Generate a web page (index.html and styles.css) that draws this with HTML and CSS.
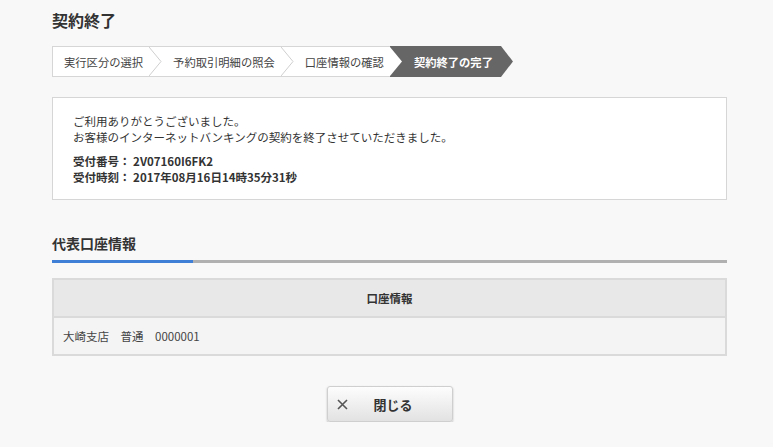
FILE: index.html
```html
<!DOCTYPE html>
<html lang="ja">
<head>
	<meta charset="UTF-8">
	<title>契約終了</title>
	<link rel="stylesheet" href="styles.css">
</head>
<body>
	<main class="page">

		<h1 class="page-title">契約終了</h1>

		<ol class="steps">
			<li class="steps-bar">
				<span class="step step-first">実行区分の選択</span>
				<svg class="sep" width="13" height="31" viewBox="0 0 13 31"><rect x="0" y="0" width="13" height="31" fill="#fff"/><line x1="0" y1="0.5" x2="13" y2="0.5" stroke="#d6d6d6"/><line x1="0" y1="30.5" x2="13" y2="30.5" stroke="#d6d6d6"/><polyline points="0,1 12,15.5 0,30" fill="none" stroke="#cfcfcf"/></svg>
				<span class="step">予約取引明細の照会</span>
				<svg class="sep" width="13" height="31" viewBox="0 0 13 31"><rect x="0" y="0" width="13" height="31" fill="#fff"/><line x1="0" y1="0.5" x2="13" y2="0.5" stroke="#d6d6d6"/><line x1="0" y1="30.5" x2="13" y2="30.5" stroke="#d6d6d6"/><polyline points="0,1 12,15.5 0,30" fill="none" stroke="#cfcfcf"/></svg>
				<span class="step">口座情報の確認</span>
				<svg class="sep sep-last" width="13" height="31" viewBox="0 0 13 31"><polygon points="0,1 12,15.5 0,30" fill="#fff"/></svg>
			</li>
			<li class="step step-current">契約終了の完了</li>
		</ol>

		<div class="message">
			<p>ご利用ありがとうございました。<br>お客様のインターネットバンキングの契約を終了させていただきました。</p>
			<p class="receipt">受付番号：&nbsp;2V07160I6FK2<br>受付時刻：&nbsp;2017年08月16日14時35分31秒</p>
		</div>

		<h2 class="section-title">代表口座情報</h2>
		<div class="section-bar"></div>

		<table class="account">
			<thead>
				<tr><th>口座情報</th></tr>
			</thead>
			<tbody>
				<tr><td>大崎支店&emsp;普通&emsp;0000001</td></tr>
			</tbody>
		</table>

		<div class="actions">
			<button class="close-btn">
				<svg class="close-x" width="11" height="11" viewBox="0 0 11 11"><path d="M1 1L10 10M10 1L1 10" stroke="#555" stroke-width="1.6" fill="none"/></svg>
				<span class="close-label">閉じる</span>
			</button>
		</div>

	</main>
</body>
</html>
```

FILE: styles.css
```css
* {
	box-sizing: border-box;
}

body {
	margin: 0;
	background-color: #f8f8f8;
	color: #333;
	font-family: "Noto Sans CJK JP", "Noto Sans", sans-serif;
}

.page {
	width: 675px;
	margin-left: 52px;
	padding-top: 10px;
}

.page-title {
	margin: 0;
	font-size: 16px;
	line-height: 20px;
	font-weight: bold;
}

.steps {
	display: flex;
	margin: 16px 0 0;
	padding: 0;
	list-style: none;
	height: 31px;
}

.steps-bar {
	display: flex;
	position: relative;
	z-index: 1;
}

.step {
	display: flex;
	align-items: center;
	height: 31px;
	padding: 0 6px 0 11px;
	background-color: #fff;
	border-top: 1px solid #d6d6d6;
	border-bottom: 1px solid #d6d6d6;
	font-size: 11.3px;
	color: #444;
	white-space: nowrap;
}

.step-first {
	border-left: 1px solid #d6d6d6;
}

.sep {
	display: block;
	flex-shrink: 0;
}

.step-current {
	margin-left: -13px;
	padding: 0 20px 0 24px;
	border: 0;
	background-color: #666;
	color: #fff;
	font-weight: bold;
	clip-path: polygon(0 0, calc(100% - 12px) 0, 100% 50%, calc(100% - 12px) 100%, 0 100%);
}

.message {
	margin-top: 20px;
	padding: 15px 20px 14px;
	background-color: #fff;
	border: 1px solid #d6d6d6;
	font-size: 11.5px;
	line-height: 16px;
}

.message p {
	margin: 0;
}

.message .receipt {
	margin-top: 8px;
	font-weight: bold;
}

.section-title {
	margin: 33px 0 0;
	padding-bottom: 7px;
	font-size: 14px;
	line-height: 20px;
	font-weight: bold;
}

.section-bar {
	height: 3px;
	background-color: #b0b0b0;
}

.section-bar::before {
	content: "";
	display: block;
	width: 141px;
	height: 3px;
	background-color: #3f7fd6;
}

.account {
	width: 100%;
	margin-top: 15px;
	border-collapse: collapse;
	border: 2px solid #dadada;
	font-size: 11.5px;
}

.account th {
	height: 38px;
	background-color: #e8e8e8;
	font-weight: bold;
	text-align: center;
	border-bottom: 2px solid #dadada;
}

.account td {
	height: 38px;
	padding-left: 9px;
	background-color: #f4f4f4;
	color: #444;
}

.actions {
	display: flex;
	justify-content: center;
	margin-top: 30px;
}

.close-btn {
	display: flex;
	align-items: center;
	width: 126px;
	height: 36px;
	padding: 0 0 0 9px;
	border: 1px solid #cfcfcf;
	border-radius: 3px;
	background: linear-gradient(#fdfdfd, #e2e2e2);
	box-shadow: 0 1px 2px rgba(0, 0, 0, .25);
	font-family: inherit;
	color: #333;
}

.close-x {
	display: block;
}

.close-label {
	margin-left: 26px;
	font-size: 13px;
	font-weight: bold;
}
```
